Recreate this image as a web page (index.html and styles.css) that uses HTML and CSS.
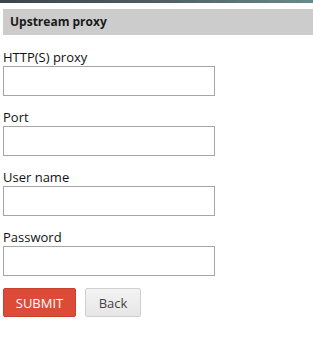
FILE: index.html
```html
<!DOCTYPE html>
<html>
<head>
    <title>Upstream proxy</title>
    <link rel="stylesheet" href="styles.css">
</head>
<body>
    <div class="topbar"></div>
    <div class="page">
        <h2 class="section-title">Upstream proxy</h2>
        <form class="proxy-form">
            <div class="field">
                <label for="proxy">HTTP(S) proxy</label>
                <input type="text" id="proxy">
            </div>
            <div class="field">
                <label for="port">Port</label>
                <input type="text" id="port">
            </div>
            <div class="field">
                <label for="user">User name</label>
                <input type="text" id="user">
            </div>
            <div class="field">
                <label for="pass">Password</label>
                <input type="password" id="pass">
            </div>
            <div class="actions">
                <button type="button" class="btn btn-submit">Submit</button>
                <button type="button" class="btn btn-back">Back</button>
            </div>
        </form>
    </div>
</body>
</html>
```

FILE: styles.css
```css
body {
    margin: 0;
    background: #fff;
    color: #111;
    font-family: 'Open Sans', sans-serif;
    font-size: 13px;
}
.topbar {
    height: 3px;
    background: linear-gradient(to right, #3b464c, #4d5d63 50%, #6a8a8a);
}
.page {
    padding: 0 0 0 3px;
}
.section-title {
    margin: 6px 0 0 0;
    height: 26px;
    line-height: 26px;
    padding-left: 7px;
    background: #cccccc;
    color: #1a1a1a;
    font-size: 12px;
    font-weight: bold;
}
.proxy-form {
    margin-top: 14px;
}
.field {
    margin-bottom: 13px;
}
.field label {
    display: block;
    height: 16px;
    line-height: 16px;
    margin-bottom: 1px;
}
.field input {
    display: block;
    box-sizing: border-box;
    width: 212px;
    height: 30px;
    margin: 0;
    border: 1px solid #a6a6a6;
    padding: 4px 6px;
    font: inherit;
}
.actions {
    display: flex;
    gap: 9px;
    margin-top: -1px;
}
.btn {
    box-sizing: border-box;
    height: 29px;
    border-radius: 2px;
    font-family: inherit;
    font-size: 13px;
    padding: 0;
}
.btn-submit {
    width: 73px;
    background: #dc4a38;
    border: 1px solid #c9402f;
    color: #fff;
    text-transform: uppercase;
}
.btn-back {
    width: 56px;
    background: linear-gradient(#f3f3f3, #e6e6e6);
    border: 1px solid #cfcfcf;
    color: #444;
}
```
